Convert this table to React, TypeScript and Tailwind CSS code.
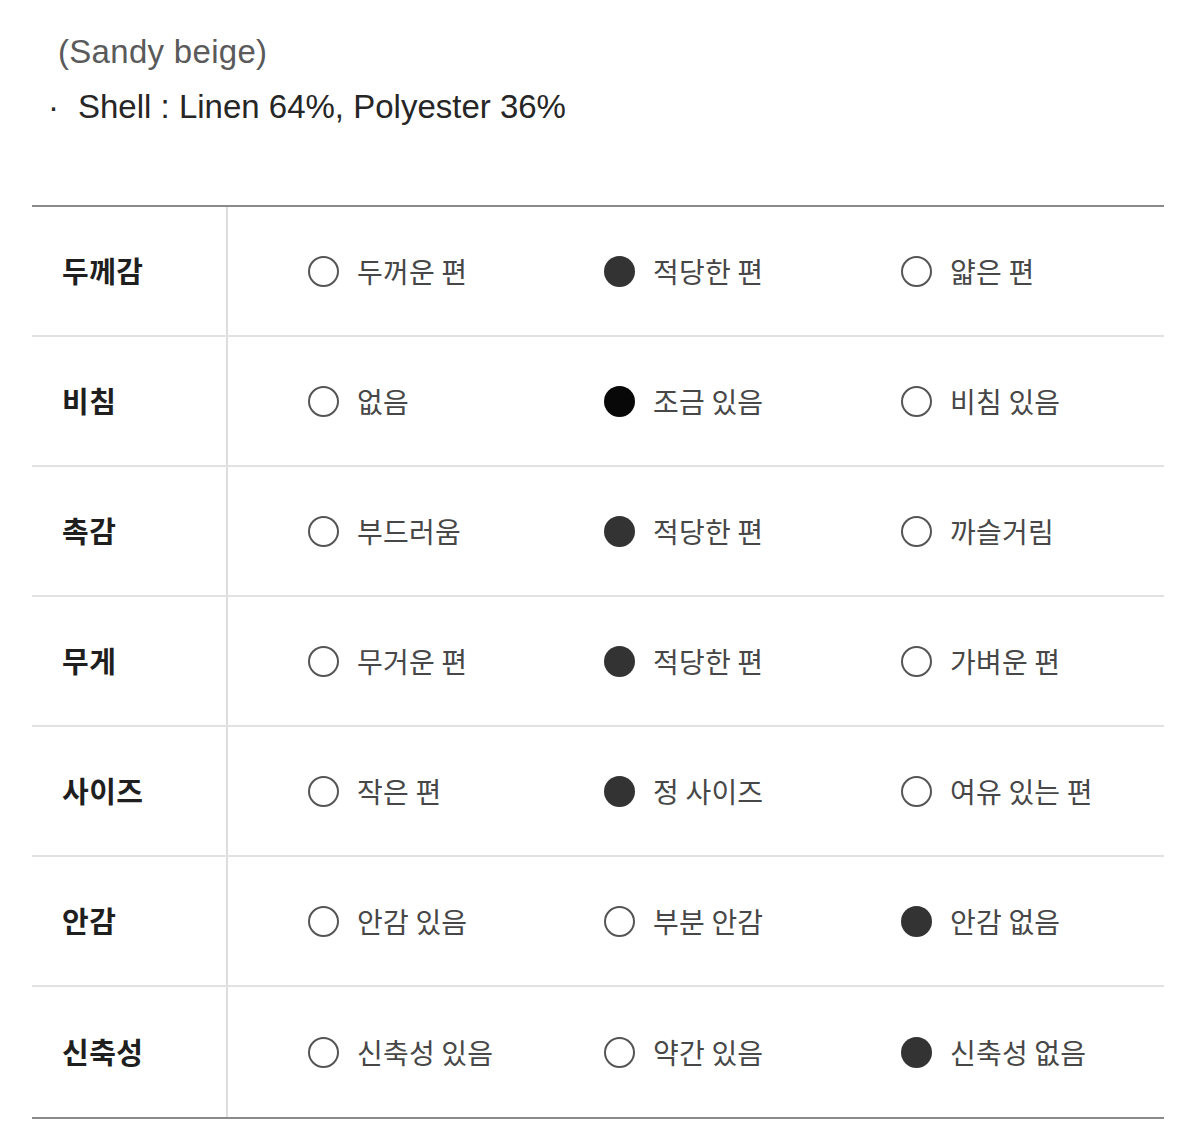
import React from "react";

type Opt = { label: string; on?: boolean; black?: boolean };
const rows: { name: string; opts: Opt[] }[] = [
  { name: "두께감", opts: [{ label: "두꺼운 편" }, { label: "적당한 편", on: true }, { label: "얇은 편" }] },
  { name: "비침", opts: [{ label: "없음" }, { label: "조금 있음", on: true, black: true }, { label: "비침 있음" }] },
  { name: "촉감", opts: [{ label: "부드러움" }, { label: "적당한 편", on: true }, { label: "까슬거림" }] },
  { name: "무게", opts: [{ label: "무거운 편" }, { label: "적당한 편", on: true }, { label: "가벼운 편" }] },
  { name: "사이즈", opts: [{ label: "작은 편" }, { label: "정 사이즈", on: true }, { label: "여유 있는 편" }] },
  { name: "안감", opts: [{ label: "안감 있음" }, { label: "부분 안감" }, { label: "안감 없음", on: true }] },
  { name: "신축성", opts: [{ label: "신축성 있음" }, { label: "약간 있음" }, { label: "신축성 없음", on: true }] },
];

function Radio({ on, black }: { on?: boolean; black?: boolean }) {
  if (on) {
    return <span className={`block w-[31px] h-[31px] rounded-full shrink-0 ${black ? "bg-[#080808]" : "bg-[#333333]"}`} />;
  }
  return <span className="block w-[31px] h-[31px] rounded-full border-2 border-[#555555] shrink-0" />;
}

export default function App() {
  return (
    <div className="w-[1200px] h-[1126px] bg-white overflow-hidden" style={{ fontFamily: '"Noto Sans CJK KR", "Noto Sans", sans-serif' }}>
      <div className="pt-[30px] pl-[58px]" style={{ fontFamily: '"Liberation Sans", "Noto Sans CJK KR", sans-serif' }}>
        <div className="text-[33px] leading-[44px] text-[#5a5a5a] tracking-[0.3px]">(Sandy beige)</div>
        <div className="text-[33px] leading-[48px] text-[#262626] mt-[9px] -ml-[10px] flex">
          <span className="w-[30px]">·</span>
          <span>Shell : Linen 64%, Polyester 36%</span>
        </div>
      </div>
      <div className="mt-[74px] ml-[32px] w-[1132px] border-t-2 border-b-2 border-[#8a8a8a]">
        {rows.map((r, i) => (
          <div
            key={r.name}
            className={`flex ${i === 0 ? "h-[128px]" : i === rows.length - 1 ? "h-[132px] border-t-2 border-[#e2e2e2]" : "h-[130px] border-t-2 border-[#e2e2e2]"}`}
          >
            <div className="w-[196px] border-r-2 border-[#dddddd] flex items-center pl-[30px] text-[29px] tracking-[0.5px] font-bold text-[#1f1f1f]">
              {r.name}
            </div>
            <div className="flex-1 grid grid-cols-[296px_297px_1fr] pl-[80px] items-center">
              {r.opts.map((o, j) => (
                <div key={j} className="flex items-center gap-[18px]">
                  <Radio on={o.on} black={o.black} />
                  <span className="text-[28px] text-[#474747] tracking-[0.2px]">{o.label}</span>
                </div>
              ))}
            </div>
          </div>
        ))}
      </div>
    </div>
  );
}
